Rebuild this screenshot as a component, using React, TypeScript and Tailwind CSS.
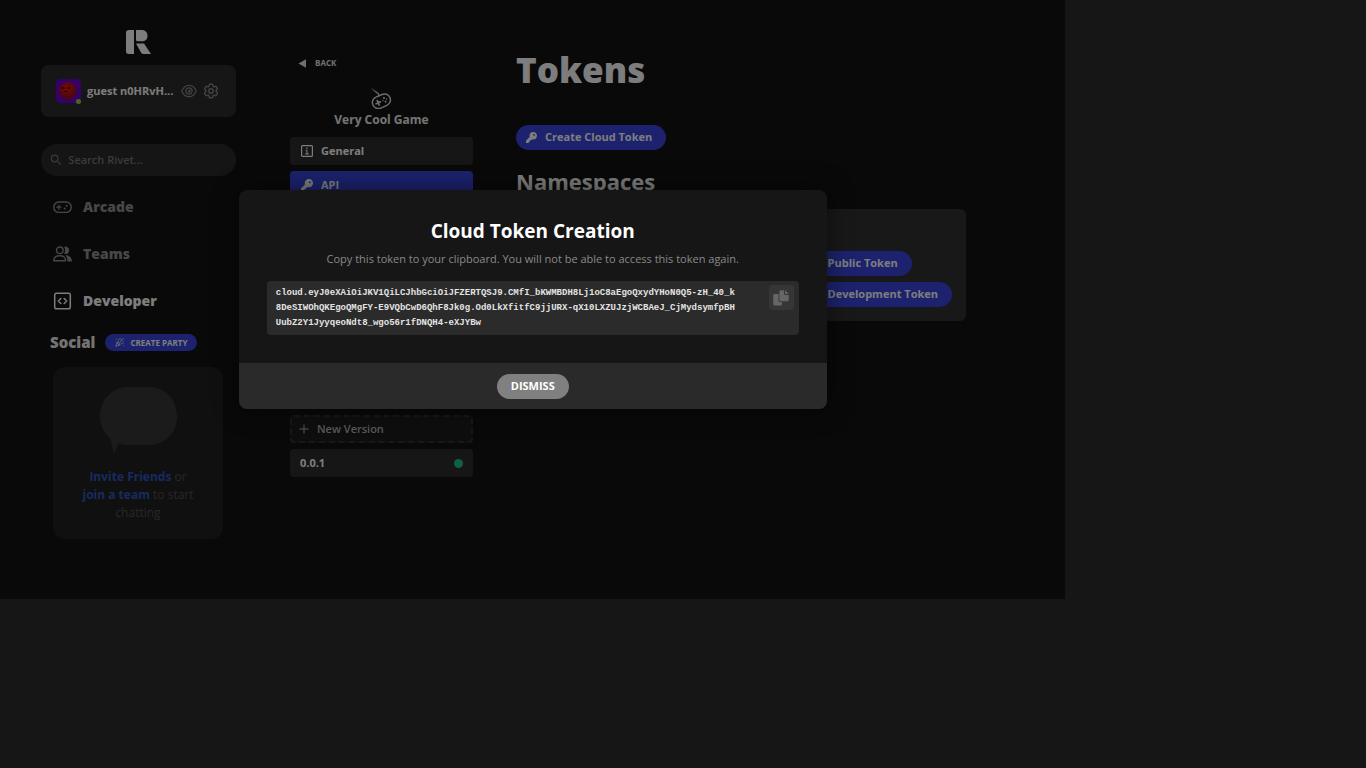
import type { ReactNode } from "react";
import { FaKey } from "react-icons/fa6";
import { MdSearch } from "react-icons/md";
import { LuPartyPopper } from "react-icons/lu";

const stroke = {
  fill: "none",
  stroke: "currentColor",
  strokeWidth: 1.5,
  strokeLinecap: "round" as const,
  strokeLinejoin: "round" as const,
};

function Logo() {
  return (
    <svg viewBox="0 0 25 24" className="h-6 w-[25px]" fill="currentColor" role="img" aria-label="Rivet">
      <path d="M3 0H8V24H3Q0 24 0 21.500V2.500Q0 0 3 0Z" />
      <path d="M10 0H15.500C19.500 0 21.500 2.600 21.500 5.700C21.500 8.900 19.500 11.300 15.500 11.300H11.500Q10 11.300 10 9.800Z" />
      <path d="M10 13.500H18L25 24H17.500Q16 24 15.300 23Z" />
    </svg>
  );
}

function Avatar() {
  return (
    <svg viewBox="0 0 25 24" className="h-6 w-[25px]" aria-hidden="true">
      <defs>
        <radialGradient id="face" cx="45%" cy="35%">
          <stop offset="0" stopColor="#e01818" />
          <stop offset="0.7" stopColor="#bd1010" />
          <stop offset="1" stopColor="#861038" />
        </radialGradient>
      </defs>
      <rect width="25" height="24" rx="5" fill="#6e00d2" />
      <circle cx="12" cy="12" r="9" fill="url(#face)" />
      <path d="M5.500 9.500q1.500-1.500 3 0M11 9.500q1.500-1.500 3 0M8 12.500h4" fill="none" stroke="#590808" strokeWidth="1.200" />
    </svg>
  );
}

function EyeIcon() {
  return (
    <svg viewBox="0 0 16 14" className="h-3.5 w-4" {...stroke} aria-hidden="true">
      <path d="M0.800 7C2.200 3.500 4.800 1.300 8 1.300S13.800 3.500 15.200 7C13.800 10.500 11.200 12.700 8 12.700S2.200 10.500 0.800 7Z" strokeWidth="1.200" />
      <circle cx="8" cy="7" r="3.100" strokeWidth="1.200" />
      <path d="M8 5.400A1.700 1.700 0 1 1 6.500 7.500Q8 7.500 8 5.400Z" fill="currentColor" stroke="none" />
    </svg>
  );
}

function GearIcon() {
  return (
    <svg viewBox="0 0 24 24" className="size-[18px]" {...stroke} strokeWidth={1.9} aria-hidden="true">
      <path d="M9.600 3.940c.09-.54.560-.940 1.110-.940h2.590c.55 0 1.020.4 1.110.940l.21 1.280c.06.370.31.690.65.870.07.040.15.080.22.130.32.190.72.250 1.070.120l1.220-.46c.51-.190 1.090.020 1.370.490l1.300 2.250c.27.470.16 1.080-.26 1.430l-1 .83c-.29.240-.44.610-.43.990v.260c-.01.380.14.750.43.990l1 .83c.42.350.54.950.26 1.430l-1.300 2.240c-.27.480-.85.690-1.370.490l-1.220-.46c-.35-.13-.75-.07-1.070.13-.07.040-.15.080-.22.120-.34.190-.59.500-.65.870l-.21 1.280c-.09.540-.56.940-1.110.940h-2.590c-.55 0-1.020-.4-1.110-.940l-.21-1.280c-.06-.37-.31-.69-.65-.87l-.22-.13c-.32-.19-.72-.25-1.080-.12l-1.220.46c-.51.190-1.090-.02-1.370-.49l-1.300-2.250c-.27-.47-.16-1.080.26-1.430l1-.83c.29-.24.44-.61.430-.99v-.26c.01-.38-.14-.75-.43-.99l-1-.83c-.42-.35-.54-.95-.26-1.430l1.300-2.250c.27-.47.85-.68 1.370-.49l1.220.46c.35.130.75.070 1.070-.12l.22-.13c.34-.18.590-.5.650-.87z" />
      <circle cx="12" cy="12" r="3" />
    </svg>
  );
}

function ArcadeIcon() {
  return (
    <svg viewBox="0 0 19 16" className="h-4 w-[19px]" {...stroke} aria-hidden="true">
      <rect x="0.800" y="3" width="17.400" height="10.400" rx="5" strokeWidth="1.400" />
      <path d="M5.800 6.200v4M3.800 8.200h4" strokeWidth="1.300" />
      <circle cx="13.600" cy="6.800" r="1" fill="currentColor" stroke="none" />
      <circle cx="11.700" cy="9.600" r="1" fill="currentColor" stroke="none" />
    </svg>
  );
}

function TeamsIcon() {
  return (
    <svg viewBox="0 0 19 16" className="h-4 w-[19px]" {...stroke} aria-hidden="true">
      <circle cx="6.800" cy="4.300" r="3.300" strokeWidth="1.400" />
      <path d="M0.800 14.800C0.800 11.500 3 9.700 6.700 9.700S12.600 11.500 12.600 14.800Z" strokeWidth="1.400" />
      <path d="M11.200 0.700A3.800 3.800 0 1 1 11.200 7.900C12.400 5.700 12.400 2.900 11.200 0.700Z" fill="currentColor" stroke="none" />
      <path d="M12.300 9.200C16.500 9 18.900 11.300 18.900 15.400H14.400C14.500 12.700 13.900 10.800 12.300 9.200Z" fill="currentColor" stroke="none" />
    </svg>
  );
}

function DeveloperIcon() {
  return (
    <svg viewBox="0 0 19 18" className="h-[18px] w-[19px]" {...stroke} aria-hidden="true">
      <rect x="1.700" y="1.200" width="15.600" height="15.600" rx="1.800" />
      <path d="M7.800 6.500 5.300 9l2.500 2.500M11.200 6.500 13.700 9l-2.500 2.500" />
    </svg>
  );
}

function ControllerIcon() {
  return (
    <svg viewBox="0 0 21 22" className="h-[22px] w-[21px] text-[#d8d8d8]" {...stroke} aria-hidden="true">
      <defs>
        <linearGradient id="cable" x1="0" y1="0" x2="1" y2="1">
          <stop offset="0" stopColor="#d8d8d8" stopOpacity="0.200" />
          <stop offset="0.700" stopColor="#d8d8d8" />
        </linearGradient>
      </defs>
      <g transform="rotate(-24 10.500 14)">
        <rect x="1" y="8.200" width="18.600" height="12" rx="6" />
        <path d="M6.800 12v4.600M4.500 14.300h4.600" strokeWidth="1.800" />
        <circle cx="14" cy="12.300" r="1" fill="currentColor" stroke="none" />
        <circle cx="14" cy="16.200" r="1" fill="currentColor" stroke="none" />
        <circle cx="12" cy="14.200" r="0.700" fill="currentColor" stroke="none" />
        <circle cx="16" cy="14.200" r="0.700" fill="currentColor" stroke="none" />
      </g>
      <path d="M8 8.700C8 6 6 5.600 4.300 4.500 2.800 3.600 1.800 2.600 0.800 1.500" stroke="url(#cable)" />
    </svg>
  );
}

function InfoIcon() {
  return (
    <svg viewBox="0 0 12 12" className="size-3" {...stroke} aria-hidden="true">
      <rect x="0.600" y="0.600" width="10.800" height="10.800" rx="1" strokeWidth="1.200" />
      <path d="M4.900 5.300H6V8.800M4.500 8.900H7.600" strokeWidth="1" />
      <circle cx="6" cy="3.200" r="0.800" fill="currentColor" stroke="none" />
    </svg>
  );
}

function CopyIcon() {
  return (
    <svg viewBox="0 0 16 16" className="size-4" fill="currentColor" aria-hidden="true">
      <path d="M1.500 4H5.500V10.500Q5.500 12.200 7.200 12.200H9V14Q9 15.500 7.500 15.500H1.500Q0.200 15.500 0.200 14V5.500Q0.200 4 1.500 4Z" />
      <path d="M7.800 0.300H11V3.500Q11 5 12.500 5H15.700V9.700Q15.700 11.200 14.200 11.200H7.800Q6.400 11.200 6.400 9.700V1.800Q6.400 0.300 7.800 0.300Z" />
      <path d="M12 0.300 15.700 4H12.700Q12 4 12 3.300Z" />
    </svg>
  );
}

function NavLink({ icon, label, active }: { icon: ReactNode; label: string; active?: boolean }) {
  return (
    <a
      href="#"
      className={
        active
          ? "flex h-[47px] items-center gap-[11px] text-[14px] font-extrabold text-[#fafafa]"
          : "flex h-[47px] items-center gap-[11px] text-[14px] font-extrabold text-[#8e8e8e]"
      }
    >
      {icon}
      {label}
    </a>
  );
}

function TokenButton({ label }: { label: string }) {
  return (
    <button
      type="button"
      className="flex h-[25px] items-center gap-2 rounded-full bg-[#3844dc] pr-3.5 pl-2.5 text-[11px] font-bold whitespace-nowrap"
    >
      <FaKey className="size-[11px]" />
      {label}
    </button>
  );
}

function Sidebar() {
  return (
    <nav className="ml-[41px] flex w-[195px] shrink-0 flex-col pt-[30px]">
      <div className="flex justify-center">
        <Logo />
      </div>
      <div className="mt-[11px] flex h-[52px] items-center rounded-lg bg-[#2c2c2c] pl-[15px]">
        <div className="relative">
          <Avatar />
          <span className="absolute right-0 -bottom-px size-[5px] rounded-full bg-[#8ad43f]" />
        </div>
        <span className="ml-1.5 text-[11px] font-bold">guest n0HRvH...</span>
        <button type="button" aria-label="View profile" className="ml-2 text-[#848484]">
          <EyeIcon />
        </button>
        <button type="button" aria-label="Settings" className="ml-[5px] text-[#848484]">
          <GearIcon />
        </button>
      </div>
      <label className="mt-[27px] flex h-8 items-center gap-[5px] rounded-full bg-[#2a2a2a] pl-2 text-[#777777]">
        <MdSearch className="size-4" aria-hidden="true" />
        <input
          aria-label="Search Rivet"
          placeholder="Search Rivet..."
          className="w-full min-w-0 bg-transparent text-[11px] font-semibold outline-none placeholder:text-[#777777]"
        />
      </label>
      <div className="mt-[7px] ml-3 flex flex-col">
        <NavLink icon={<ArcadeIcon />} label="Arcade" />
        <NavLink icon={<TeamsIcon />} label="Teams" />
        <NavLink icon={<DeveloperIcon />} label="Developer" active />
      </div>
      <div className="mt-2.5 ml-[9px] flex h-[17px] items-center gap-2.5">
        <h2 className="text-[15px] font-extrabold text-[#e8e8e8]">Social</h2>
        <button
          type="button"
          className="flex h-[17px] items-center gap-1.5 rounded-full bg-[#3844dc] px-2.5 text-[8px] font-bold whitespace-nowrap"
        >
          <LuPartyPopper className="size-[9px]" />
          CREATE PARTY
        </button>
      </div>
      <section className="mt-4 ml-3 flex w-[170px] flex-col items-center rounded-xl bg-[#202020] px-6 pt-5 pb-[17px] text-center">
        <svg viewBox="0 0 77 67" className="h-[67px] w-[77px]" fill="#363636" aria-hidden="true">
          <path d="M29 0H48C66 0 77 13 77 29S66 58 48 58H29Q23 58 18.500 56.500L14 67 10 51C3 45 0 38 0 29C0 13 12 0 29 0Z" />
        </svg>
        <p className="mt-3.5 flex flex-col items-center text-[12px] leading-[18px] text-[#505050]">
          <span>
            <a href="#" className="font-bold text-[#2d56c0]">Invite Friends</a> or
          </span>
          <span>
            <a href="#" className="font-bold text-[#2d56c0]">join a team</a> to start
          </span>
          <span>chatting</span>
        </p>
      </section>
    </nav>
  );
}

function GameMenu() {
  return (
    <nav className="ml-[54px] flex w-[183px] shrink-0 flex-col pt-[55px]">
      <a href="#" className="ml-2 flex h-4 items-center gap-[9px] self-start text-[8px] font-bold text-[#e0e0e0]">
        <svg viewBox="0 0 8 9" className="h-[9px] w-2" fill="currentColor" aria-hidden="true">
          <path d="M8 0.300V8.700L0.500 4.500Z" />
        </svg>
        BACK
      </a>
      <div className="mt-4 flex flex-col items-center">
        <ControllerIcon />
        <h2 className="text-[12px] leading-[22px] font-bold text-[#e8e8e8]">Very Cool Game</h2>
      </div>
      <div className="mt-1.5 flex flex-col gap-1.5 text-[11px] font-bold">
        <a href="#" className="flex h-7 items-center gap-2 rounded bg-[#2c2c2c] pl-[11px]">
          <InfoIcon />
          General
        </a>
        <a href="#" aria-current="page" className="flex h-7 items-center gap-2 rounded bg-[#3844dc] pl-[11px]">
          <FaKey className="size-3" />
          API
        </a>
      </div>
      <div className="mt-[216px] flex flex-col gap-1.5 text-[11px]">
        <button
          type="button"
          className="flex h-7 items-center gap-2 rounded border-2 border-dashed border-[#303030] bg-[#1d1d1d] pl-[7px] font-semibold text-[#b0b0b0]"
        >
          <svg viewBox="0 0 10 10" className="size-2.5" stroke="currentColor" aria-hidden="true">
            <path d="M5 0.500V9.500M0.500 5H9.500" />
          </svg>
          New Version
        </button>
        <a href="#" className="flex h-7 items-center justify-between rounded bg-[#2c2c2c] px-2.5 font-bold">
          0.0.1
          <span className="size-[9px] rounded-full bg-[#22c080]" />
        </a>
      </div>
    </nav>
  );
}

function TokensPage() {
  return (
    <main className="ml-[43px] flex w-[450px] shrink-0 flex-col pt-[46px]">
      <h1 className="text-[35px] leading-[48px] font-extrabold">Tokens</h1>
      <div className="mt-[31px] flex">
        <TokenButton label="Create Cloud Token" />
      </div>
      <h2 className="mt-4 text-[22px] leading-[30px] font-bold">Namespaces</h2>
      <section className="mt-[13px] flex h-28 flex-col items-end justify-end rounded-md bg-[#303030] p-3.5">
        <div className="flex flex-col items-start gap-1.5">
          <TokenButton label="Create Public Token" />
          <TokenButton label="Create Development Token" />
        </div>
      </section>
    </main>
  );
}

const tokenLines = [
  "cloud.eyJ0eXAiOiJKV1QiLCJhbGciOiJFZERTQSJ9.CMfI_bKWMBDH8Lj1oC8aEgoQxydYHoN0Q5-zH_40_k",
  "8DeSIWOhQKEgoQMgFY-E9VQbCwD6QhF8Jk0g.Od0LkXfitfC9jjURX-qX10LXZUJzjWCBAeJ_CjMydsymfpBH",
  "UubZ2Y1JyyqeoNdt8_wgo56r1fDNQH4-eXJYBw",
];

function TokenDialog() {
  return (
    <div
      role="dialog"
      aria-modal="true"
      aria-labelledby="dialog-title"
      className="w-[588px] overflow-hidden rounded-lg bg-[#161616] shadow-[0_0_24px_rgba(0,0,0,0.5)]"
    >
      <div className="px-7 pt-[27px] pb-7 text-center">
        <h2 id="dialog-title" className="text-[19px] leading-7 font-bold text-white">
          Cloud Token Creation
        </h2>
        <p className="mt-1.5 text-[11px] leading-4 text-[#8a8a8a]">
          Copy this token to your clipboard. You will not be able to access this token again.
        </p>
        <div className="mt-3.5 flex items-start justify-between rounded bg-[#2b2b2b] py-1 pr-[5px] pl-[9px] text-left">
          <code className="block pt-px font-['Liberation_Mono',monospace] text-[9px] leading-[15px] font-bold whitespace-pre text-[#e4e4e4]">
            {tokenLines.join("\n")}
          </code>
          <button
            type="button"
            aria-label="Copy token"
            className="flex size-[25px] items-center justify-center rounded bg-[#363636] text-[#666666]"
          >
            <CopyIcon />
          </button>
        </div>
      </div>
      <div className="flex h-[46px] items-center justify-center bg-[#2a2a2a]">
        <button type="button" className="h-[25px] rounded-full bg-[#808080] px-3.5 text-[11px] font-bold text-white">
          DISMISS
        </button>
      </div>
    </div>
  );
}

export default function App() {
  return (
    <div className="min-h-screen bg-[#161616] font-['Open_Sans',sans-serif] text-[#fafafa]">
      <div className="relative h-[78vh] w-[78vw] overflow-hidden bg-[#131313]">
        <div className="flex">
          <Sidebar />
          <GameMenu />
          <TokensPage />
        </div>
        <div className="absolute inset-0 flex items-center justify-center bg-black/50">
          <TokenDialog />
        </div>
      </div>
    </div>
  );
}
